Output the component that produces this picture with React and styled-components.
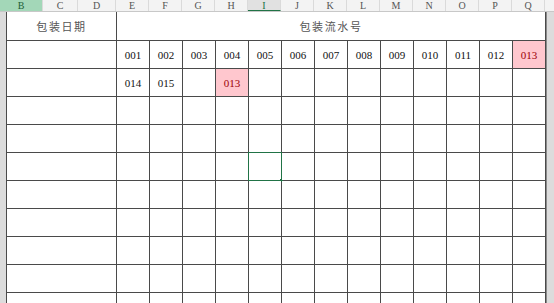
import React from 'react';
import styled, { createGlobalStyle } from 'styled-components';

const COLUMNS = ['E', 'F', 'G', 'H', 'I', 'J', 'K', 'L', 'M', 'N', 'O', 'P', 'Q'];
const SELECTED_COL = 'I';

// body rows below the title row; each entry maps column letter -> cell
const ROWS = [
  {
    E: { text: '001' }, F: { text: '002' }, G: { text: '003' }, H: { text: '004' },
    I: { text: '005' }, J: { text: '006' }, K: { text: '007' }, L: { text: '008' },
    M: { text: '009' }, N: { text: '010' }, O: { text: '011' }, P: { text: '012' },
    Q: { text: '013', bad: true },
  },
  { E: { text: '014' }, F: { text: '015' }, H: { text: '013', bad: true } },
  {},
  {},
  { I: { active: true } },
  {},
  {},
  {},
  {},
  {},
];

const GlobalStyle = createGlobalStyle`
  html, body {
    margin: 0;
    padding: 0;
    overflow: hidden;
    background: #ffffff;
  }
`;

const App = () => (
  <>
    <GlobalStyle />
    <Window>
      <HeaderBar>
        <ColHead $w={43} $picked>B</ColHead>
        <ColHead $w={35}>C</ColHead>
        <ColHead $w={38}>D</ColHead>
        {COLUMNS.map((c) => (
          <ColHead key={c} $w={33} $current={c === SELECTED_COL}>
            {c}
          </ColHead>
        ))}
        <HeaderRest />
      </HeaderBar>
      <Body>
        <Gutter />
        <Sheet>
          <TitleCell>包装日期</TitleCell>
          <TitleCell $span={13}>包装流水号</TitleCell>
          {ROWS.map((row, r) => (
            <React.Fragment key={r}>
              <Cell />
              {COLUMNS.map((c) => {
                const cell = row[c] || {};
                return (
                  <Cell key={c} $bad={cell.bad} $active={cell.active}>
                    {cell.text}
                  </Cell>
                );
              })}
            </React.Fragment>
          ))}
        </Sheet>
        <RightGutter />
      </Body>
    </Window>
  </>
);

export default App;

const Window = styled.div`
  width: 554px;
  height: 303px;
  overflow: hidden;
  display: flex;
  flex-direction: column;
`;

const HeaderBar = styled.div`
  display: flex;
  height: 11px;
  background: #f3f3f3;
  border-bottom: 1px solid #c8c8c8;
  flex-shrink: 0;
`;

const ColHead = styled.div`
  box-sizing: border-box;
  width: ${(p) => p.$w}px;
  height: 11px;
  display: flex;
  align-items: center;
  justify-content: center;
  font-family: 'Liberation Serif', serif;
  font-size: 10px;
  color: ${(p) => (p.$picked ? '#1d5e37' : p.$current ? '#217346' : '#555555')};
  background: ${(p) => (p.$picked ? '#a3d7b8' : p.$current ? '#e1e1e1' : 'transparent')};
  border-right: 1px solid #dadada;
  border-bottom: ${(p) => (p.$current ? '1px solid #217346' : 'none')};
`;

const HeaderRest = styled.div`
  flex: 1;
`;

const Body = styled.div`
  display: flex;
  flex: 1;
  min-height: 0;
`;

const Gutter = styled.div`
  width: 6px;
  background: #dcdcdc;
  flex-shrink: 0;
`;

const RightGutter = styled.div`
  width: 7px;
  background: #dcdcdc;
  border-left: 1px solid #8a8a8a;
  flex-shrink: 0;
`;

const Sheet = styled.div`
  display: grid;
  grid-template-columns: 109px repeat(13, 32px);
  grid-template-rows: 28px;
  grid-auto-rows: 27px;
  gap: 1px;
  padding: 0 1px 1px;
  background: #4a4a4a;
  align-content: start;
  overflow: hidden;
`;

const TitleCell = styled.div`
  grid-column: span ${(p) => p.$span || 1};
  background: #ffffff;
  display: flex;
  align-items: center;
  justify-content: center;
  font-family: 'Liberation Serif', 'Noto Sans CJK SC', serif;
  font-size: 11px;
  letter-spacing: 1.6px;
  color: #555555;
`;

const Cell = styled.div`
  position: relative;
  background: ${(p) => (p.$bad ? '#ffc7ce' : '#ffffff')};
  color: ${(p) => (p.$bad ? '#9c0006' : '#111111')};
  display: flex;
  align-items: center;
  justify-content: center;
  font-family: 'Liberation Serif', serif;
  font-size: 11px;

  ${(p) =>
    p.$active &&
    `
    &::before {
      content: '';
      position: absolute;
      inset: -1px;
      border: 1px solid #217346;
    }
    &::after {
      content: '';
      position: absolute;
      right: -2px;
      bottom: -2px;
      width: 3px;
      height: 3px;
      background: #217346;
    }
  `}
`;
